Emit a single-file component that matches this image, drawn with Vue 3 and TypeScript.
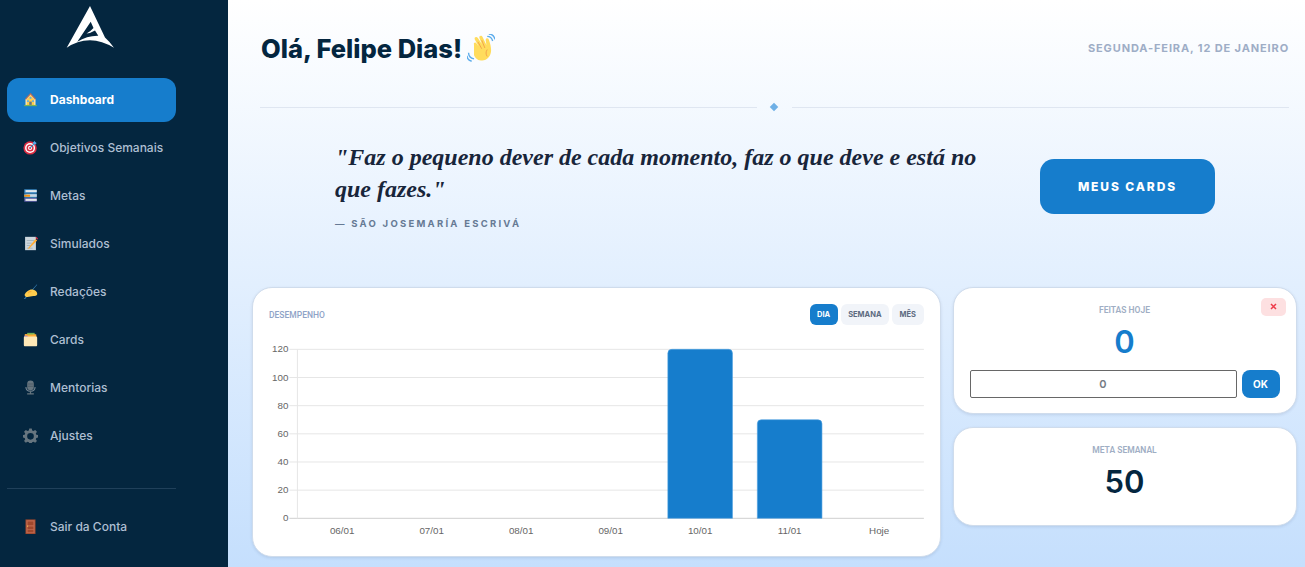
<script setup lang="ts">
const icons: Record<string, string> = {
  house: '<path fill="#ffe8b6" d="M6 18 18 5l12 13v13H6z"/><path fill="#c1694f" d="M18 2 5 16l2 3L18 7l11 12 2-3z" opacity=".8"/><path fill="#ffcc4d" d="M18 8 9 18v13h18V18z"/><path fill="#66757f" d="M15 23h6v8h-6z"/><path fill="#55acee" d="M10 20h4v4h-4zM22 20h4v4h-4zM16 12h4v4h-4z"/><path fill="#77b255" d="M3 31h30v3H3z"/>',
  target: '<circle fill="#dd2e44" cx="17" cy="19" r="16"/><circle fill="#fff" cx="17" cy="19" r="12"/><circle fill="#dd2e44" cx="17" cy="19" r="8.500"/><circle fill="#fff" cx="17" cy="19" r="5"/><circle fill="#dd2e44" cx="17" cy="19" r="2.500"/><path stroke="#3b88c3" stroke-width="2.500" d="M17 19 31 5"/><path fill="#55acee" d="m28 2 1 4 4 1-4 4-4-1-1-4z"/>',
  books: '<path fill="#5c5ea8" d="M3 24h30v9H3z"/><path fill="#e6e7e8" d="M6 26h27v5H6z"/><path fill="#3b88c3" d="M3 3h30v9H3z"/><path fill="#e1e8ed" d="M6 5h27v5H6z"/><path fill="#55acee" d="M3 13h30v10H3z"/><path fill="#ccd6dd" d="M8 15h25v6H8z"/><path fill="#f4900c" d="M3 16h14v5H3z"/>',
  memo: '<path fill="#ccd6dd" d="M5 2h26v32H5z"/><path fill="#99aab5" d="M9 10h18v2H9zM9 16h12v2H9zM9 22h8v2H9zM9 28h14v2H9z"/><path fill="#ffac33" d="M14 27 30 7l4 4-19 19-4 1z"/><path fill="#dd2e44" d="m30 4 2-2 4 4-2 3z"/>',
  hand: '<path fill="#3b88c3" d="M2 36 33 1l1 1L5 36z"/><path fill="#ffcc4d" d="M4 25c3-5 8-9 13-11 3-1 8-1 11 1 4 2 7 6 6 10-1 3-5 4-9 4-6 1-12 3-17 2-2 0-5-4-4-6z"/><path fill="#ffac33" d="M12 20c2-3 6-4 9-3l-2 3c-3 0-5 1-7 3z"/>',
  folder: '<path fill="#77b255" d="M10 2h18v9H10z"/><path fill="#ffac33" d="M4 6c3-2 6-1 8 0h12c3-1 6-1 8 0v9H4z"/><path fill="#9266cc" d="M3 9h8v4H3z"/><path fill="#ffe8b6" d="M2 14c0-2 1-3 3-3h26c2 0 3 1 3 3v17c0 2-1 3-3 3H5c-2 0-3-1-3-3z"/>',
  mic: '<rect fill="#66757f" x="10" y="1" width="16" height="24" rx="8"/><path fill="#4f5d68" d="M10 7h16v1.500H10zM10 11h16v1.500H10zM10 15h16v1.500H10z"/><path fill="none" stroke="#7a8894" stroke-width="2.500" d="M7 17c0 7 5 10 11 10s11-3 11-10"/><path fill="#66757f" d="M16.500 27h3v5h-3zM10 32h16v3H10z"/>',
  gear: '<path fill="#66757f" fill-rule="evenodd" d="M15 1h6l1 5 3 1.300 4.300-2.800 4.200 4.200L30.700 13l1.300 3 4 1v6l-4 1-1.300 3 2.800 4.300-4.200 4.200-4.300-2.800-3 1.300-1 2h-6l-1-2-3-1.300-4.300 2.800-4.200-4.200L5.300 27 4 24l-4-1v-6l4-1 1.300-3-2.800-4.300 4.200-4.200L11 7.300 14 6zM18 12a8 8 0 1 0 0 16 8 8 0 0 0 0-16z"/>',
  door: '<path fill="#a0482d" d="M6 1h24v35H6z"/><path fill="#c1694f" d="M8 3h20v31H8z"/><path fill="#a0482d" d="M11 6h14v9H11zM11 18h14v6H11zM11 26h14v6H11z"/><circle fill="#ffcc4d" cx="11" cy="17" r="1.500"/>',
};

interface NavItem { label: string; icon: string; active?: boolean }

const navItems: NavItem[] = [
  { label: 'Dashboard', icon: 'house', active: true },
  { label: 'Objetivos Semanais', icon: 'target' },
  { label: 'Metas', icon: 'books' },
  { label: 'Simulados', icon: 'memo' },
  { label: 'Redações', icon: 'hand' },
  { label: 'Cards', icon: 'folder' },
  { label: 'Mentorias', icon: 'mic' },
  { label: 'Ajustes', icon: 'gear' },
];

const left = 28.4;
const right = 654.9;
const y0 = 178.3;
const unit = 1.408;
const yFor = (v: number) => y0 - v * unit;

const ticks = [120, 100, 80, 60, 40, 20, 0];
const days = [
  { label: '06/01', v: 0 },
  { label: '07/01', v: 0 },
  { label: '08/01', v: 0 },
  { label: '09/01', v: 0 },
  { label: '10/01', v: 120 },
  { label: '11/01', v: 70 },
  { label: 'Hoje', v: 0 },
];
const band = (right - left) / days.length;
const centre = (i: number) => left + band * (i + 0.5);
const barPath = (i: number, v: number) => {
  const w = 64.6;
  const x = centre(i) - w / 2;
  const y = yFor(v);
  return `M${x} ${y0}V${y + 4}Q${x} ${y} ${x + 4} ${y}H${x + w - 4}Q${x + w} ${y} ${x + w} ${y + 4}V${y0}Z`;
};
</script>

<template>
  <div class="app">
    <aside class="sidebar">
      <div class="logo">
        <svg width="52" height="46" viewBox="0 0 52 46">
          <path fill="#fff" fill-rule="evenodd" d="M26 2 41 33.500Q46 38 50 43.700Q38 36.500 26 36.200Q13 36.500 2.700 43.700Z M26.700 17.700 13.300 37.700Q23 31.500 34.300 31.700L31 26.500Q27 29 22.500 29.500Q27 27 29.500 24Z"/>
        </svg>
      </div>
      <nav class="nav">
        <a v-for="item in navItems" :key="item.label" class="nav-item" :class="{ active: item.active }">
          <svg class="nav-icon" viewBox="0 0 36 36" v-html="icons[item.icon]"></svg>
          <span>{{ item.label }}</span>
        </a>
      </nav>
      <div class="side-foot">
        <a class="nav-item">
          <svg class="nav-icon" viewBox="0 0 36 36" v-html="icons.door"></svg>
          <span>Sair da Conta</span>
        </a>
      </div>
    </aside>

    <main class="main">
      <header class="top">
        <h1 class="hello">Olá, Felipe Dias!
          <svg class="wave" viewBox="0 0 36 36">
            <path fill="#ffdc5d" d="M9 14c-1-3 2-4 3-2l3 4-5-9c-1-3 2-4 4-2l5 8-3-8c-1-3 3-4 4-1l5 10-1-6c0-3 3-3 4-1 2 5 3 10 3 14 0 8-6 14-13 13-5 0-8-4-9-7z"/>
            <path fill="none" stroke="#ef9645" stroke-width="1" d="m14 10 5 9M19 8l4 10M26 20c-2 3-2 6 0 9"/>
            <path fill="none" stroke="#5dadec" stroke-width="1.800" d="M26 3c3 0 6 2 7 6M28 0c4 0 7 3 8 7M2 24c0 4 3 7 7 8M0 28c0 3 3 6 6 7"/>
          </svg>
        </h1>
        <div class="date">SEGUNDA-FEIRA, 12 DE JANEIRO</div>
      </header>

      <div class="divider">
        <span class="line"></span>
        <span class="diamond"></span>
        <span class="line"></span>
      </div>

      <section class="hero">
        <div class="quote">
          <p class="quote-text">"Faz o pequeno dever de cada momento, faz o que deve e está no que fazes."</p>
          <p class="quote-author">— SÃO JOSEMARÍA ESCRIVÁ</p>
        </div>
        <button class="cta">MEUS CARDS</button>
      </section>

      <section class="grid">
        <div class="card chart-card">
          <div class="chart-head">
            <span class="chart-title">DESEMPENHO</span>
            <div class="tabs">
              <button class="tab on">DIA</button>
              <button class="tab">SEMANA</button>
              <button class="tab">MÊS</button>
            </div>
          </div>
          <svg class="chart" width="656" height="205" viewBox="0 0 656 205">
            <line v-for="t in ticks" :key="t" :x1="left - 8" :x2="right" :y1="yFor(t)" :y2="yFor(t)" :stroke="t === 0 ? '#cfcfcf' : '#e6e6e6'" />
            <line :x1="left" :x2="left" :y1="yFor(120)" :y2="y0" stroke="#e6e6e6" />
            <text v-for="t in ticks" :key="'l' + t" class="axis" :x="left - 9" :y="yFor(t) + 3" text-anchor="end">{{ t }}</text>
            <template v-for="(d, i) in days" :key="d.label">
              <path v-if="d.v" :d="barPath(i, d.v)" fill="#167dcc" stroke="#4b9fe0" stroke-width=".6" />
              <text class="axis" :x="centre(i)" y="194" text-anchor="middle">{{ d.label }}</text>
            </template>
          </svg>
        </div>

        <div class="stack">
          <div class="card stat today">
            <button class="clear" aria-label="Limpar">
              <svg width="7" height="7" viewBox="0 0 7 7"><path d="m1 1 5 5M6 1 1 6" stroke="#ee3b4a" stroke-width="1.500" fill="none" /></svg>
            </button>
            <div class="stat-label">FEITAS HOJE</div>
            <div class="stat-num blue">0</div>
            <div class="entry">
              <input class="entry-input" value="0" />
              <button class="ok">OK</button>
            </div>
          </div>
          <div class="card stat goal">
            <div class="stat-label">META SEMANAL</div>
            <div class="stat-num navy">50</div>
          </div>
        </div>
      </section>
    </main>
  </div>
</template>

<style>
html, body { margin: 0; height: 100%; overflow: hidden; }
</style>

<style scoped>
* { box-sizing: border-box; }
.app {
  display: flex;
  width: 1305px;
  height: 567px;
  overflow: hidden;
  font-family: Inter, "Liberation Sans", sans-serif;
}
.sidebar {
  width: 228px;
  flex: none;
  background: #04263f;
  display: flex;
  flex-direction: column;
  padding: 4px 52px 0 7px;
}
.logo {
  height: 74px;
  padding-left: 57px;
}
.logo svg { display: block; }
.nav { display: flex; flex-direction: column; gap: 4px; }
.nav-item {
  display: flex;
  align-items: center;
  height: 44px;
  border-radius: 12px;
  padding: 0 0 1px 16px;
  gap: 12px;
  font-size: 12px;
  font-weight: 500;
  color: #aebfd2;
}
.nav-item.active {
  background: #167dcc;
  color: #fff;
  font-weight: 700;
}
.nav-icon { width: 15px; height: 15px; flex: none; }
.side-foot {
  margin-top: 30px;
  border-top: 1px solid #20405a;
  padding-top: 16px;
}
.main {
  flex: 1;
  min-width: 0;
  background: linear-gradient(180deg, #ffffff 0%, #c5dffd 100%);
  padding: 0 16px 0 32px;
  display: flex;
  flex-direction: column;
}
.top {
  height: 96px;
  display: flex;
  justify-content: space-between;
  align-items: center;
  padding-bottom: 1px;
}
.hello {
  margin: 2px 0 0;
  padding-left: 1px;
  display: flex;
  align-items: center;
  gap: 5px;
  font-size: 25.500px;
  font-weight: 800;
  color: #04263f;
  font-family: Inter, sans-serif;
  white-space: nowrap;
}
.wave { width: 28px; height: 28px; margin-top: -2px; }
.date {
  font-size: 11px;
  font-weight: 700;
  letter-spacing: .88px;
  color: #9eadc6;
}
.divider {
  height: 22px;
  display: flex;
  align-items: center;
  gap: 14px;
}
.line { flex: 1; height: 1px; background: #dfe6f1; }
.diamond {
  width: 6px;
  height: 6px;
  margin: 0 1px 0 0;
  background: #6fb0e6;
  transform: rotate(45deg);
}
.hero {
  height: 168.500px;
  display: flex;
  align-items: flex-start;
  padding-left: 75px;
  padding-top: 23px;
}
.quote { width: 650px; }
.quote-text {
  margin: 0;
  font-family: "Liberation Serif", serif;
  font-style: italic;
  font-weight: 700;
  font-size: 24px;
  line-height: 32px;
  color: #18253a;
}
.quote-author {
  margin: 13px 0 0;
  font-size: 9.500px;
  font-weight: 700;
  letter-spacing: 2.250px;
  color: #667a94;
}
.cta {
  margin: 18px 0 0 55px;
  width: 175px;
  height: 55px;
  border: 0;
  border-radius: 14px;
  background: #167dcc;
  color: #fff;
  font-family: Inter, sans-serif;
  font-size: 12px;
  font-weight: 800;
  letter-spacing: 1.900px;
}
.grid {
  display: flex;
  gap: 12px;
  margin-left: -8px;
  margin-right: -7.500px;
  align-items: flex-start;
}
.card {
  background: #fff;
  border: 1px solid #cfdcec;
  border-radius: 20px;
  box-shadow: 0 1px 3px rgba(30, 60, 100, .12);
}
.chart-card {
  width: 688.500px;
  height: 270px;
  padding: 16px;
  flex: none;
}
.chart-head {
  display: flex;
  justify-content: space-between;
  align-items: center;
  height: 21px;
  margin-bottom: 15.500px;
}
.chart-title {
  padding-top: 1px;
  font-family: Roboto, sans-serif;
  font-size: 8.500px;
  font-weight: 500;
  color: #8fa3c7;
}
.tabs { display: flex; gap: 3px; }
.tab {
  height: 21px;
  padding: 0 7.500px;
  border: 0;
  border-radius: 6px;
  background: #f1f4f9;
  color: #5d6b80;
  font-family: Inter, sans-serif;
  font-size: 7.500px;
  font-weight: 700;
}
.tab.on { background: #167dcc; color: #fff; }
.chart { display: block; }
.axis {
  font-family: "Liberation Sans", sans-serif;
  font-size: 9.800px;
  fill: #666;
}
.stack {
  flex: 1;
  display: flex;
  flex-direction: column;
  gap: 13px;
}
.stat {
  position: relative;
  text-align: center;
  padding: 16px;
}
.today { height: 127px; }
.goal { height: 99px; }
.stat-label {
  font-family: Roboto, sans-serif;
  font-size: 8.500px;
  font-weight: 600;
  color: #a0aec4;
  line-height: 12px;
}
.stat-num {
  font-size: 31px;
  font-weight: 600;
  line-height: 38px;
  margin-top: 7px;
}
.blue { color: #167dcc; }
.navy { color: #04263f; }
.clear {
  position: absolute;
  top: 10px;
  right: 10px;
  width: 25px;
  height: 18px;
  padding: 0;
  border: 0;
  border-radius: 5px;
  background: #fde0e1;
  display: flex;
  align-items: center;
  justify-content: center;
}
.entry {
  display: flex;
  gap: 5px;
  margin-top: 9px;
}
.entry-input {
  width: 267px;
  height: 28px;
  border: 1px solid #676767;
  border-radius: 2px;
  text-align: center;
  font-family: Inter, sans-serif;
  font-size: 11px;
  font-weight: 600;
  color: #757b85;
  background: #fff;
  padding: 0;
  outline: 0;
}
.ok {
  width: 38px;
  height: 28px;
  border: 0;
  border-radius: 8px;
  background: #167dcc;
  color: #fff;
  font-family: Inter, sans-serif;
  font-size: 10px;
  font-weight: 700;
}
</style>
